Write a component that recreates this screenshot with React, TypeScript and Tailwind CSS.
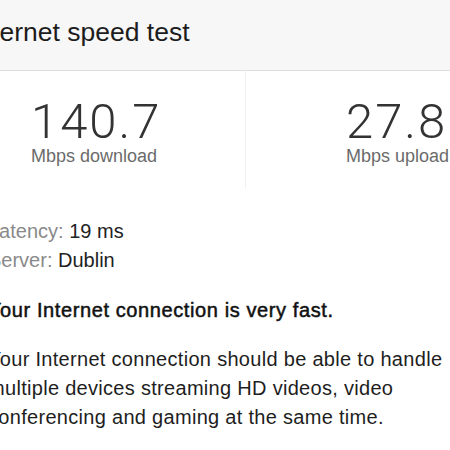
export default function App() {
  return (
    <div className="w-[450px] h-[450px] overflow-hidden bg-white font-['Liberation_Sans',Arial,sans-serif] text-[#222]">
      {/* Header */}
      <div className="h-[71px] bg-[#f7f7f7] border-b border-[#dedede] flex items-center">
        <h1 className="-ml-[30px] pb-[5px] text-[26.5px] leading-none whitespace-nowrap text-[#1c1c1c]">
          Internet speed test
        </h1>
      </div>

      {/* Speeds */}
      <div className="flex h-[118px]">
        <div className="w-[246px] shrink-0 border-r border-[#f1f1f1] pl-[31px] pt-[26px]">
          <div className="text-[49px] leading-none tracking-[2px] font-['Roboto',sans-serif] font-light text-[#333]">140.7</div>
          <div className="mt-[1px] text-[18px] leading-none text-[#6b6b6b] whitespace-nowrap">Mbps download</div>
        </div>
        <div className="flex-1 pl-[100px] pt-[26px]">
          <div className="text-[49px] leading-none tracking-[2px] font-['Roboto',sans-serif] font-light text-[#333] whitespace-nowrap">27.8</div>
          <div className="mt-[1px] text-[18px] leading-none text-[#6b6b6b] whitespace-nowrap">Mbps upload</div>
        </div>
      </div>

      {/* Details */}
      <div className="-ml-[12px] mt-[28px] text-[20px] leading-[29px] tracking-[0.3px] whitespace-nowrap">
        <div className="tracking-normal">
          <span className="text-[#8a8a8a]">Latency: </span>19 ms
        </div>
        <div className="tracking-normal">
          <span className="text-[#8a8a8a]">Server: </span>Dublin
        </div>
        <p className="mt-[21px] tracking-[0.6px] text-[#111] [-webkit-text-stroke:0.5px_#111]">
          Your Internet connection is very fast.
        </p>
        <p className="mt-[20px] text-[#1e1e1e]">
          Your Internet connection should be able to handle
          <br />
          multiple devices streaming HD videos, video
          <br />
          conferencing and gaming at the same time.
        </p>
      </div>
    </div>
  );
}
